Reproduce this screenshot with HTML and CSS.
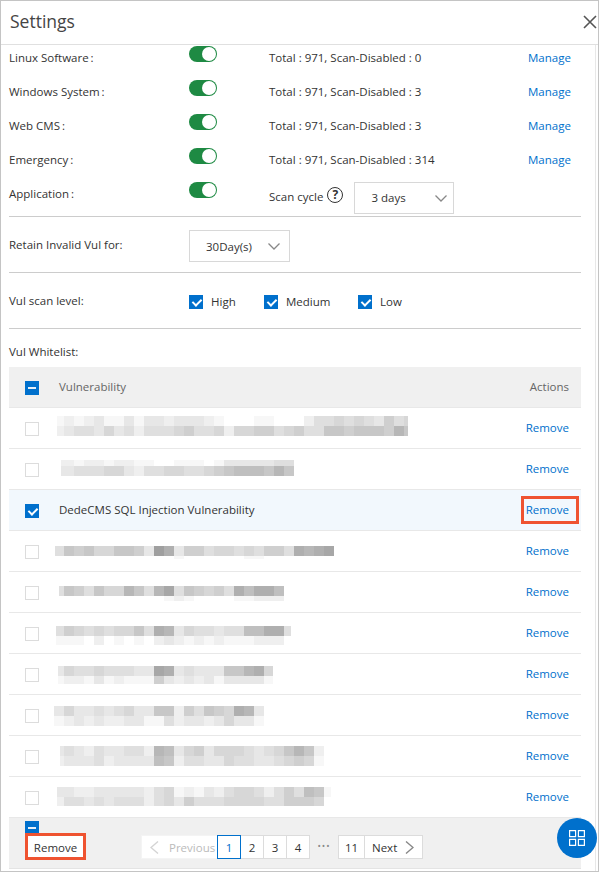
FILE: index.html
```html
<!DOCTYPE html>
<html lang="en">
<head>
    <meta charset="UTF-8">
    <title>Settings</title>
    <link rel="stylesheet" href="styles.css">
</head>
<body>
<div class="dialog">
    <div class="title-bar">
        <h1>Settings</h1>
        <svg class="close" width="14" height="14" viewBox="0 0 14 14"><path d="M1 1l12 12M13 1L1 13"/></svg>
    </div>
    <div class="panel">
        <div class="section scans">
            <div class="scan-row">
                <span class="label">Linux Software&#8201;:</span>
                <span class="switch"></span>
                <span class="stats">Total : 971, Scan-Disabled : 0</span>
                <a class="link">Manage</a>
            </div>
            <div class="scan-row">
                <span class="label">Windows System&#8201;:</span>
                <span class="switch"></span>
                <span class="stats">Total : 971, Scan-Disabled : 3</span>
                <a class="link">Manage</a>
            </div>
            <div class="scan-row">
                <span class="label">Web CMS&#8201;:</span>
                <span class="switch"></span>
                <span class="stats">Total : 971, Scan-Disabled : 3</span>
                <a class="link">Manage</a>
            </div>
            <div class="scan-row">
                <span class="label">Emergency&#8201;:</span>
                <span class="switch"></span>
                <span class="stats">Total : 971, Scan-Disabled : 314</span>
                <a class="link">Manage</a>
            </div>
            <div class="scan-row">
                <span class="label">Application&#8201;:</span>
                <span class="switch"></span>
                <div class="cycle">
                    <span>Scan cycle</span>
                    <span class="help">?</span>
                    <div class="select cycle-select">
                        <span>3 days</span>
                        <svg width="12" height="7" viewBox="0 0 12 7"><path d="M.5.5L6 6l5.5-5.5"/></svg>
                    </div>
                </div>
            </div>
        </div>
        <div class="section retain">
            <span class="label">Retain Invalid Vul for:</span>
            <div class="select retain-select">
                <span>30Day(s)</span>
                <svg width="12" height="7" viewBox="0 0 12 7"><path d="M.5.5L6 6l5.5-5.5"/></svg>
            </div>
        </div>
        <div class="section level">
            <span class="label">Vul scan level:</span>
            <div class="levels">
                <span class="level-item level-high"><i class="box on"></i>High</span>
                <span class="level-item level-medium"><i class="box on"></i>Medium</span>
                <span class="level-item"><i class="box on"></i>Low</span>
            </div>
        </div>
        <div class="whitelist-label">Vul Whitelist:</div>
        <div class="table">
            <div class="row head">
                <i class="box part"></i>
                <span class="name">Vulnerability</span>
                <span class="action">Actions</span>
            </div>
            <div class="row">
                <i class="box"></i>
                <div class="blur" data-x="57" data-end="408" data-y="8" data-h="10,10" data-a="121231131332333210001100024454543645" data-b="234435342444564452556645644776777697"></div>
                <a class="link action">Remove</a>
            </div>
            <div class="row">
                <i class="box"></i>
                <div class="blur" data-x="61" data-end="294" data-y="11" data-h="6,10" data-a="221221221100111013333344" data-b="334445532445544567888797"></div>
                <a class="link action">Remove</a>
            </div>
            <div class="row selected">
                <i class="box on"></i>
                <span class="name">DedeCMS SQL Injection Vulnerability</span>
                <a class="link action">Remove</a>
            </div>
            <div class="row">
                <i class="box"></i>
                <div class="blur" data-x="55" data-end="334" data-y="15" data-h="10,3" data-a="4767557763ca366455454664a9ab8" data-b="00000000000010000001100000000"></div>
                <a class="link action">Remove</a>
            </div>
            <div class="row">
                <i class="box"></i>
                <div class="blur" data-x="59" data-end="284" data-y="14" data-h="10,5" data-a="47647559749b476564a8aa8" data-b="00000000000121000011222"></div>
                <a class="link action">Remove</a>
            </div>
            <div class="row">
                <i class="box"></i>
                <div class="blur" data-x="56" data-end="291" data-y="13" data-h="10,9" data-a="46545455 74a93544344 88aa4" data-b="111020101023212121112220"></div>
                <a class="link action">Remove</a>
            </div>
            <div class="row">
                <i class="box"></i>
                <div class="blur" data-x="58" data-end="273" data-y="12" data-h="10,8" data-a="3544544433ba34333779a5" data-b="1221312111632323133331"></div>
                <a class="link action">Remove</a>
            </div>
            <div class="row">
                <i class="box"></i>
                <div class="blur" data-x="54" data-end="264" data-y="11" data-h="10,10" data-a="353343453377264765a93" data-b="123232233114233235331"></div>
                <a class="link action">Remove</a>
            </div>
            <div class="row">
                <i class="box"></i>
                <div class="blur" data-x="60" data-end="324" data-y="10" data-h="10,10" data-a="343243344298356355543457972" data-b="233342333387244335443345651"></div>
                <a class="link action">Remove</a>
            </div>
            <div class="row">
                <i class="box"></i>
                <div class="blur" data-x="57" data-end="331" data-y="10" data-h="10,9" data-a="3322333332451213245542464871" data-b="2443434442453644455554466650"></div>
                <a class="link action">Remove</a>
            </div>
            <div class="footer">
                <div class="bulk">
                    <i class="box part"></i>
                    <button class="remove-all">Remove</button>
                </div>
                <div class="pager">
                    <span class="page prev">
                        <svg width="9" height="13" viewBox="0 0 9 13"><path d="M8 .5l-7 6 7 6"/></svg>
                        Previous
                    </span>
                    <span class="page current">1</span>
                    <span class="page">2</span>
                    <span class="page">3</span>
                    <span class="page">4</span>
                    <span class="dots">•••</span>
                    <span class="page wide">11</span>
                    <span class="page next">
                        Next
                        <svg width="9" height="13" viewBox="0 0 9 13"><path d="M1 .5l7 6-7 6"/></svg>
                    </span>
                </div>
            </div>
        </div>
    </div>
    <div class="mark"></div>
    <div class="fab">
        <svg width="16" height="16" viewBox="0 0 16 16"><path d="M.6.6h6v6h-6zM9.4.6h6v6h-6zM.6 9.4h6v6h-6zM9.4 9.4h6v6h-6z"/></svg>
    </div>
</div>
<script src="app.js"></script>
</body>
</html>
```

FILE: styles.css
```css
* {
    box-sizing: border-box;
}
body {
    margin: 0;
    font-family: "Open Sans", "Liberation Sans", sans-serif;
    font-size: 11.5px;
    color: #333;
}
.dialog {
    position: relative;
    width: 599px;
    height: 872px;
    border: 1px solid #c4c4c4;
    overflow: hidden;
}
.title-bar {
    display: flex;
    align-items: center;
    justify-content: space-between;
    height: 44px;
    padding: 0 1px 3px 9px;
    border-bottom: 1px solid #e0e0e0;
}
.title-bar h1 {
    margin: 0;
    font-size: 17.5px;
    font-weight: 400;
    color: #444;
}
.close {
    margin-top: 2px;
    fill: none;
    stroke: #555;
    stroke-width: 1.6;
}
.panel {
    width: 595px;
    height: 826px;
    padding: 0 14px 0 8px;
    border-right: 1px solid #e8e8e8;
}
.section {
    border-bottom: 1px solid #ccc;
}
.scans {
    height: 172px;
}
.scan-row {
    display: grid;
    grid-template-columns: 180px 80px 259px auto;
    height: 34px;
    padding-top: 4px;
    line-height: 18px;
}
.switch {
    position: relative;
    width: 28px;
    height: 16px;
    margin-top: -3px;
    border-radius: 8px;
    background: #1e8a43;
}
.switch::after {
    content: "";
    position: absolute;
    top: 1px;
    right: 1px;
    width: 14px;
    height: 14px;
    border-radius: 50%;
    background: #fff;
}
.link {
    color: #0070cc;
}
.cycle {
    display: flex;
    align-items: flex-start;
    grid-column: 3 / 5;
}
.cycle > span:first-child {
    margin-top: 3px;
}
.help {
    width: 16px;
    height: 16px;
    margin: 2px 0 0 4px;
    border: 1.5px solid #333;
    border-radius: 50%;
    font-size: 12px;
    font-weight: 700;
    line-height: 13px;
    text-align: center;
}
.select {
    display: flex;
    align-items: center;
    justify-content: space-between;
    height: 32px;
    border: 1px solid #d8d8d8;
}
.select svg {
    fill: none;
    stroke: #888;
    stroke-width: 1.3;
}
.cycle-select {
    width: 100px;
    margin: -3px 0 0 11px;
    padding: 0 6px 0 16px;
}
.retain {
    display: flex;
    height: 56px;
    padding-top: 13px;
}
.retain .label {
    width: 180px;
    padding-top: 5px;
    line-height: 20px;
}
.retain-select {
    width: 101px;
    padding: 0 9px 0 16px;
}
.level {
    display: flex;
    height: 56px;
    padding-top: 19px;
}
.level .label {
    width: 180px;
    line-height: 18px;
}
.levels {
    display: flex;
    line-height: 20px;
}
.level-item {
    display: flex;
    align-items: flex-start;
}
.level-item .box {
    margin: 3px 8px 0 0;
}
.level-high {
    width: 75px;
}
.level-medium {
    width: 94px;
}
.whitelist-label {
    height: 38px;
    padding-top: 14px;
    line-height: 18px;
}
.box {
    display: block;
    position: relative;
    flex: none;
    width: 14px;
    height: 14px;
    border: 1px solid #dcdcdc;
    background: #fff;
}
.box.on, .box.part {
    border-color: #0070cc;
    background: #0070cc;
}
.box.on::after {
    content: "";
    position: absolute;
    top: 1px;
    left: 4px;
    width: 4px;
    height: 7px;
    border: solid #fff;
    border-width: 0 2px 2px 0;
    transform: rotate(45deg);
}
.box.part::after {
    content: "";
    position: absolute;
    top: 5px;
    left: 2px;
    width: 8px;
    height: 2px;
    background: #e4eff9;
}
.row {
    display: flex;
    align-items: center;
    height: 41px;
    padding: 0 12px 0 16px;
    border-bottom: 1px solid #e8e8e8;
}
.row .box {
    margin: 2px 20px 0 0;
}
.row.head {
    height: 41px;
    background: #f0f0f0;
    color: #666;
}
.row.selected {
    background: #f2f8fd;
}
.name {
    flex: 1;
    margin-top: -1px;
}
.head .name, .head .action {
    margin-top: -2px;
}
.blur {
    flex: 1;
    align-self: flex-start;
}
.blur-line {
    display: flex;
    overflow: hidden;
}
.blur-line span {
    flex: none;
}
.action {
    flex: none;
    margin-top: -1px;
}
.footer {
    display: flex;
    align-items: flex-start;
    height: 51px;
    padding-left: 16px;
    border-bottom: 1px solid #e4e4e4;
    background: #f0f0f0;
}
.bulk {
    padding-top: 3px;
}
.remove-all {
    display: block;
    position: relative;
    width: 61px;
    height: 27px;
    margin-top: -2px;
    padding: 1px 0 0;
    border: 3px solid #ef5330;
    background: #fff;
    font: inherit;
    color: #333;
}
.pager {
    display: flex;
    margin: 17px 0 0 55px;
    line-height: 22px;
}
.page {
    display: flex;
    align-items: center;
    justify-content: center;
    gap: 8px;
    width: 24px;
    height: 24px;
    margin-left: -1px;
    padding-top: 1px;
    border: 1px solid #dcdcdc;
    background: #fff;
}
.page svg {
    margin-top: -1px;
    fill: none;
    stroke: #888;
    stroke-width: 1.4;
}
.prev {
    justify-content: flex-start;
    gap: 10px;
    width: 77px;
    margin-left: 0;
    padding-left: 8px;
    border-color: #f4f4f4;
    color: #bbb;
}
.prev svg {
    stroke: #d4d4d4;
}
.current {
    position: relative;
    border-color: #0070cc;
    color: #0070cc;
}
.dots {
    width: 28px;
    font-size: 9px;
    letter-spacing: 1px;
    color: #888;
    text-align: center;
}
.wide {
    width: 27px;
    margin-left: 0;
}
.next {
    justify-content: flex-start;
    gap: 8px;
    width: 59px;
    padding-left: 7px;
}
.mark {
    position: absolute;
    top: 495px;
    left: 520px;
    width: 58px;
    height: 28px;
    border: 3px solid #ef5330;
}
.fab {
    position: absolute;
    top: 817px;
    left: 556px;
    display: flex;
    align-items: center;
    justify-content: center;
    width: 40px;
    height: 40px;
    border-radius: 50%;
    background: #0070cc;
}
.fab svg {
    fill: none;
    stroke: #fff;
    stroke-width: 1.2;
}
```

FILE: app.js
```js
// the blurred rows are stored as two lines of grey levels, one hex digit a cell
var GRID = 4;

function line(levels, x, end, height) {
    var el = document.createElement('div');
    el.className = 'blur-line';
    el.style.height = height + 'px';
    el.style.width = (end - x) + 'px';
    levels = levels.replace(/\s/g, '');
    for (var i = 0; i < levels.length; i++) {
        var cell = document.createElement('span');
        // first cell stops at the next mosaic boundary
        var first = 10 - ((x - GRID) % 10 + 10) % 10;
        var grey = 255 - parseInt(levels[i], 16) * 8;
        cell.style.width = (i === 0 ? first : 10) + 'px';
        cell.style.background = 'rgb(' + grey + ',' + grey + ',' + grey + ')';
        el.appendChild(cell);
    }
    return el;
}

document.querySelectorAll('.blur').forEach(function (blur) {
    var x = +blur.dataset.x;
    var end = +blur.dataset.end;
    var heights = blur.dataset.h.split(',');
    blur.style.marginLeft = (x - 59) + 'px';
    blur.style.marginTop = blur.dataset.y + 'px';
    blur.appendChild(line(blur.dataset.a, x, end, heights[0]));
    blur.appendChild(line(blur.dataset.b, x, end, heights[1]));
});
```
